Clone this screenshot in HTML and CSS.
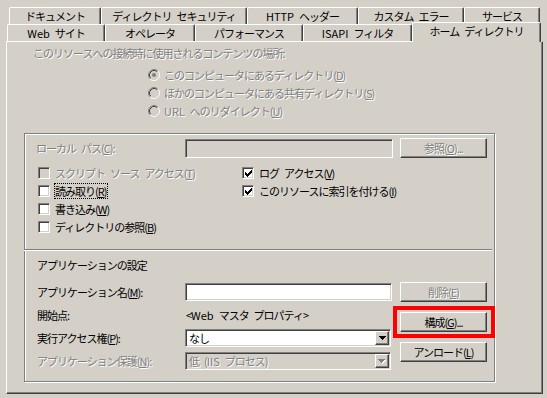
FILE: index.html
```html
<!DOCTYPE html>
<html lang="ja">
<head>
<meta charset="utf-8">
<title>ホーム ディレクトリ</title>
<link rel="stylesheet" href="styles.css">
</head>
<body>
<div class="dialog">
  <div class="tabs">
    <div class="tabrow back">
      <div class="tab t-doc">ドキュメント</div>
      <div class="tab t-sec">ディレクトリ セキュリティ</div>
      <div class="tab t-http"><span class="lat">HTTP</span> ヘッダー</div>
      <div class="tab t-err">カスタム エラー</div>
      <div class="tab t-svc">サービス</div>
    </div>
    <div class="tabrow front">
      <div class="tab t-web"><span class="lat">Web</span> サイト</div>
      <div class="tab t-op">オペレータ</div>
      <div class="tab t-perf">パフォーマンス</div>
      <div class="tab t-isapi"><span class="lat">ISAPI</span> フィルタ</div>
      <div class="tab t-home sel">ホーム ディレクトリ</div>
    </div>
  </div>

  <div class="panel">
    <p class="heading dis">このリソースへの接続時に使用されるコンテンツの場所:</p>
    <ul class="radios">
      <li>
        <svg class="radio" width="12" height="12" viewBox="0 0 12 12"><circle cx="6" cy="6" r="4.5" fill="#d4d0c8"/><path d="M2.11 9.89A5.5 5.5 0 0 1 9.89 2.11" fill="none" stroke="#808080"/><path d="M9.89 2.11A5.5 5.5 0 0 1 2.11 9.89" fill="none" stroke="#fff"/><path d="M2.82 9.18A4.5 4.5 0 0 1 9.18 2.82" fill="none" stroke="#404040"/><path d="M9.18 2.82A4.5 4.5 0 0 1 2.82 9.18" fill="none" stroke="#d4d0c8"/><circle cx="6" cy="6" r="2" fill="#808080"/></svg>
        <span class="dis">このコンピュータにあるディレクトリ(<u>D</u>)</span>
      </li>
      <li>
        <svg class="radio" width="12" height="12" viewBox="0 0 12 12"><circle cx="6" cy="6" r="4.5" fill="#d4d0c8"/><path d="M2.11 9.89A5.5 5.5 0 0 1 9.89 2.11" fill="none" stroke="#808080"/><path d="M9.89 2.11A5.5 5.5 0 0 1 2.11 9.89" fill="none" stroke="#fff"/><path d="M2.82 9.18A4.5 4.5 0 0 1 9.18 2.82" fill="none" stroke="#404040"/><path d="M9.18 2.82A4.5 4.5 0 0 1 2.82 9.18" fill="none" stroke="#d4d0c8"/></svg>
        <span class="dis">ほかのコンピュータにある共有ディレクトリ(<u>S</u>)</span>
      </li>
      <li>
        <svg class="radio" width="12" height="12" viewBox="0 0 12 12"><circle cx="6" cy="6" r="4.5" fill="#d4d0c8"/><path d="M2.11 9.89A5.5 5.5 0 0 1 9.89 2.11" fill="none" stroke="#808080"/><path d="M9.89 2.11A5.5 5.5 0 0 1 2.11 9.89" fill="none" stroke="#fff"/><path d="M2.82 9.18A4.5 4.5 0 0 1 9.18 2.82" fill="none" stroke="#404040"/><path d="M9.18 2.82A4.5 4.5 0 0 1 2.82 9.18" fill="none" stroke="#d4d0c8"/></svg>
        <span class="dis"><span class="lat">URL</span> へのリダイレクト(<u>U</u>)</span>
      </li>
    </ul>

    <div class="frame">
      <section class="box1">
        <div class="pathrow">
          <span class="lbl dis">ローカル パス(<u>C</u>):</span>
          <div class="field off path"></div>
          <button type="button" class="btn dis">参照(<u>O</u>)...</button>
        </div>
        <div class="checks">
          <label class="chk"><span class="cb off"></span><span class="dis">スクリプト ソース アクセス(<u>T</u>)</span></label>
          <label class="chk"><span class="cb"></span><span class="focus">読み取り(<u>R</u>)</span></label>
          <label class="chk"><span class="cb"></span><span>書き込み(<u>W</u>)</span></label>
          <label class="chk"><span class="cb"></span><span>ディレクトリの参照(<u>B</u>)</span></label>
          <label class="chk"><span class="cb"><svg width="7" height="7" viewBox="0 0 7 7"><path d="M6 0h1v1h-1zM5 1h2v1h-2zM0 2h1v1h-1zM4 2h3v1h-3zM0 3h2v1h-2zM3 3h3v1h-3zM0 4h5v1h-5zM1 5h3v1h-3zM2 6h1v1h-1z" fill="#000"/></svg></span><span>ログ アクセス(<u>V</u>)</span></label>
          <label class="chk"><span class="cb"><svg width="7" height="7" viewBox="0 0 7 7"><path d="M6 0h1v1h-1zM5 1h2v1h-2zM0 2h1v1h-1zM4 2h3v1h-3zM0 3h2v1h-2zM3 3h3v1h-3zM0 4h5v1h-5zM1 5h3v1h-3zM2 6h1v1h-1z" fill="#000"/></svg></span><span>このリソースに索引を付ける(<u>I</u>)</span></label>
        </div>
      </section>
      <div class="divider"></div>
      <section class="box2">
        <div class="sectitle">アプリケーションの設定</div>
        <div class="approws">
          <div class="appleft">
            <div class="approw">
              <span class="lbl">アプリケーション名(<u>M</u>):</span>
              <div class="field app"></div>
            </div>
            <div class="approw">
              <span class="lbl">開始点:</span>
              <span class="value">&lt;<span class="lat">Web</span> マスタ プロパティ&gt;</span>
            </div>
            <div class="approw">
              <span class="lbl">実行アクセス権(<u>P</u>):</span>
              <div class="field combo"><span class="ctext">なし</span><span class="arrow"><svg width="7" height="4" viewBox="0 0 7 4"><path d="M0 0h7v1h-1v1h-1v1h-1v1h-1v-1h-1v-1h-1v-1h-1z" fill="#000"/></svg></span></div>
            </div>
            <div class="approw">
              <span class="lbl dis">アプリケーション保護(<u>N</u>):</span>
              <div class="field combo off"><span class="ctext dis">低 (<span class="lat">IIS</span> プロセス)</span><span class="arrow"><svg width="8" height="5" viewBox="0 0 8 5"><path d="M1 1h7v1h-1v1h-1v1h-1v1h-1v-1h-1v-1h-1v-1h-1z" fill="#fff"/><path d="M0 0h7v1h-1v1h-1v1h-1v1h-1v-1h-1v-1h-1v-1h-1z" fill="#808080"/></svg></span></div>
            </div>
          </div>
          <div class="appbtns">
            <button type="button" class="btn dis">削除(<u>E</u>)</button>
            <button type="button" class="btn hl">構成(<u>G</u>)...</button>
            <button type="button" class="btn">アンロード(<u>L</u>)</button>
          </div>
        </div>
      </section>
    </div>
  </div>
</div>
</body>
</html>
```

FILE: styles.css
```css
* {
  box-sizing: border-box;
}

html,
body {
  margin: 0;
  padding: 0;
}

body {
  width: 547px;
  height: 398px;
  overflow: hidden;
  background: #d4d0c8;
  color: #000;
  font-family: "Noto Sans CJK JP", "Noto Sans", sans-serif;
  font-size: 11px;
  line-height: 14px;
  letter-spacing: -1px;
  word-spacing: 3.5px;
}

.lat {
  letter-spacing: 0;
}

.dis {
  color: #808080;
  text-shadow: 1px 1px 0 #fff;
}

u {
  text-decoration: underline;
}

.dialog {
  padding-top: 7px;
}

/* ---------- tabs ---------- */
.tabrow {
  display: flex;
  height: 17px;
}

.tabrow.back {
  margin-left: 9px;
}

.tabrow.front {
  margin-left: 7px;
  position: relative;
  z-index: 2;
}

.tab {
  height: 17px;
  flex: none;
  display: flex;
  align-items: center;
  justify-content: center;
  border-top: 1px solid #fff;
  border-left: 1px solid #fff;
  border-right: 1px solid #404040;
  border-radius: 2px 2px 0 0;
  box-shadow: inset -1px 0 0 #808080;
  background: #d4d0c8;
  white-space: pre;
}

.t-doc { width: 92px; }
.t-sec { width: 146px; }
.t-http { width: 111px; }
.t-err { width: 106px; }
.t-svc { width: 76px; }

.t-web { width: 98px; }
.t-op { width: 90px; }
.t-perf { width: 108px; }
.t-isapi { width: 109px; }
.t-home { width: 129px; }

.tab.sel {
  height: 20px;
  margin-top: -2px;
  padding-bottom: 3px;
}

/* ---------- panel ---------- */
.panel {
  position: relative;
  z-index: 1;
  margin-left: 6px;
  width: 537px;
  height: 353px;
  border: 1px solid;
  border-color: #fff #404040 #404040 #fff;
  box-shadow: inset -1px -1px 0 #808080;
}

.heading {
  margin: 0;
  padding: 4px 0 0 26px;
  white-space: nowrap;
}

.radios {
  list-style: none;
  margin: 6px 0 0;
  padding: 0 0 0 141px;
}

.radios li {
  display: flex;
  align-items: center;
  gap: 4px;
  height: 18px;
  white-space: nowrap;
}

.radio {
  flex: none;
}

/* ---------- group frame ---------- */
.frame {
  margin: 13px 0 0 17px;
  width: 471px;
  height: 249px;
  border: 1px solid #808080;
  box-shadow: inset 1px 1px 0 #fff, 1px 1px 0 #fff;
}

.box1 {
  height: 115px;
  padding: 4px 0 0 11px;
}

.pathrow {
  display: flex;
  align-items: center;
  height: 20px;
}

.lbl {
  flex: none;
  white-space: nowrap;
}

.pathrow .lbl {
  width: 149px;
}

.field {
  flex: none;
  border: 1px solid;
  border-color: #808080 #fff #fff #808080;
  box-shadow: inset 1px 1px 0 #404040, inset -1px -1px 0 #d4d0c8;
  background: #fff;
}

.field.off {
  background: #d4d0c8;
}

.field.path {
  width: 208px;
  height: 19px;
}

.btn {
  flex: none;
  width: 87px;
  height: 20px;
  margin: 0 0 0 7px;
  padding: 0;
  border: 1px solid;
  border-color: #fff #404040 #404040 #fff;
  box-shadow: inset -1px -1px 0 #808080;
  background: #d4d0c8;
  font: inherit;
  letter-spacing: inherit;
  word-spacing: inherit;
  color: #000;
  white-space: nowrap;
}

.btn.dis {
  color: #808080;
}

.checks {
  display: grid;
  grid-template-columns: 204px 1fr;
  grid-template-rows: repeat(4, 18px);
  grid-auto-flow: column;
  margin: 6px 0 0 2px;
}

.chk {
  display: flex;
  align-items: center;
  gap: 5px;
  white-space: nowrap;
}

.cb {
  flex: none;
  width: 12px;
  height: 12px;
  display: flex;
  align-items: center;
  justify-content: center;
  border: 1px solid;
  border-color: #808080 #fff #fff #808080;
  box-shadow: inset 1px 1px 0 #404040, inset -1px -1px 0 #d4d0c8;
  background: #fff;
}

.cb.off {
  background: #d4d0c8;
}

.focus {
  outline: 1px dotted #000;
  outline-offset: 0;
  padding: 0 1px 0 0;
}

.divider {
  width: 468px;
  height: 2px;
  margin-left: -1px;
  border-top: 1px solid #808080;
  border-bottom: 1px solid #fff;
}

.box2 {
  padding: 7px 0 0 12px;
}

.sectitle {
  height: 14px;
  white-space: nowrap;
}

.approws {
  display: flex;
  margin-top: 10px;
}

.appleft {
  width: 363px;
  padding-top: 1px;
  display: flex;
  flex-direction: column;
  gap: 5px;
}

.approw {
  display: flex;
  align-items: center;
  height: 18px;
}

.approw .lbl {
  width: 148px;
}

.value {
  margin-left: 1px;
  white-space: nowrap;
}

.field.app {
  width: 207px;
  height: 18px;
}

.field.combo {
  width: 206px;
  height: 18px;
  display: flex;
  align-items: center;
  padding-left: 3px;
}

.ctext {
  white-space: nowrap;
}

.arrow {
  margin-left: auto;
  margin-right: 1px;
  width: 14px;
  height: 14px;
  display: flex;
  align-items: center;
  justify-content: center;
  border: 1px solid;
  border-color: #fff #404040 #404040 #fff;
  box-shadow: inset -1px -1px 0 #808080;
  background: #d4d0c8;
}

.appbtns {
  display: flex;
  flex-direction: column;
  gap: 10px;
}

.appbtns .btn {
  margin: 0;
}

.btn.hl {
  position: relative;
}

.btn.hl::after {
  content: "";
  position: absolute;
  left: -8px;
  right: -9px;
  top: -7px;
  bottom: -7px;
  border: 4px solid #f00;
}
```
